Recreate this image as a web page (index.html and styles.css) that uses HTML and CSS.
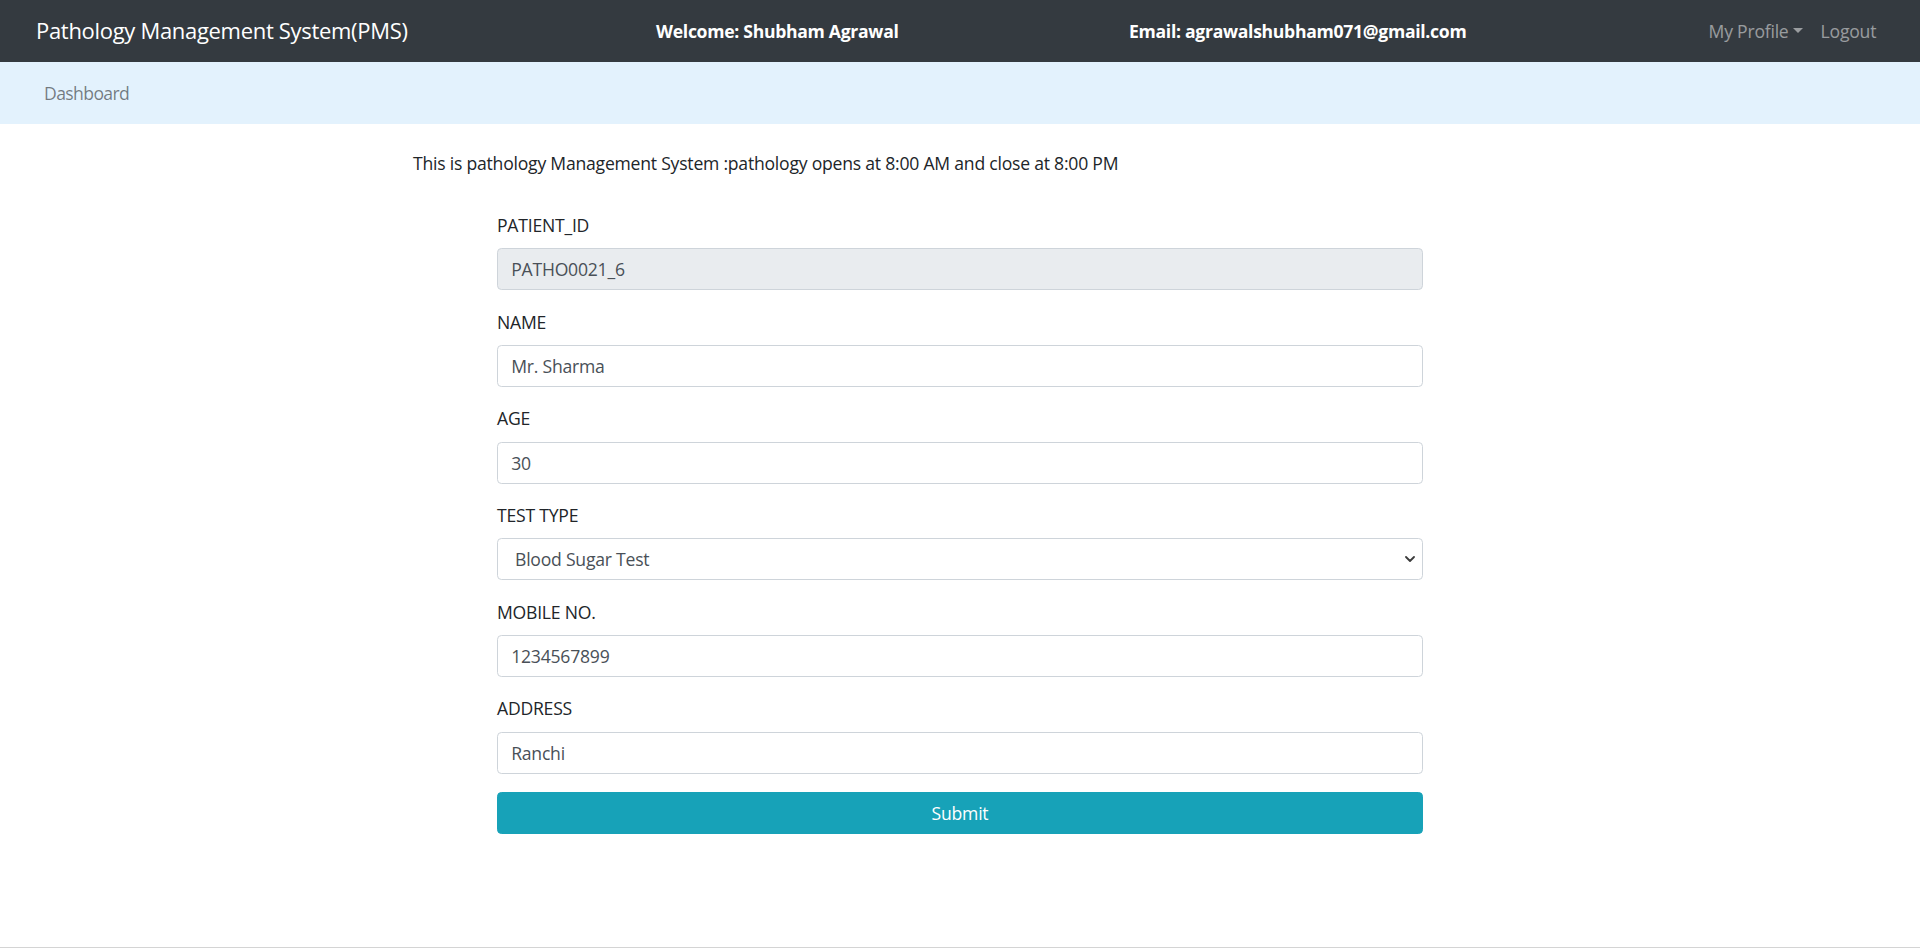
FILE: index.html
```html
<!DOCTYPE html>
<html lang="en">
<head>
<meta charset="utf-8">
<title>Pathology Management System</title>
<link rel="stylesheet" href="styles.css">
</head>
<body>
<header class="topbar">
  <a class="brand" href="#">Pathology Management System(PMS)</a>
  <span class="info">Welcome: Shubham Agrawal</span>
  <span class="info">Email: agrawalshubham071@gmail.com</span>
  <nav class="user-nav">
    <a class="nav-link dropdown-toggle" href="#">My Profile</a>
    <a class="nav-link" href="#">Logout</a>
  </nav>
</header>
<nav class="subbar">
  <a class="sub-link" href="#">Dashboard</a>
</nav>
<main class="page">
  <div class="container">
    <p class="intro">This is pathology Management System :pathology opens at 8:00 AM and close at 8:00 PM</p>
    <form class="patient-form">
      <div class="field">
        <label class="field-label">PATIENT_ID</label>
        <input class="control" type="text" value="PATHO0021_6" disabled>
      </div>
      <div class="field">
        <label class="field-label">NAME</label>
        <input class="control" type="text" value="Mr. Sharma">
      </div>
      <div class="field">
        <label class="field-label">AGE</label>
        <input class="control" type="text" value="30">
      </div>
      <div class="field">
        <label class="field-label">TEST TYPE</label>
        <div class="select-wrap">
          <select class="control select">
            <option>Blood Sugar Test</option>
          </select>
          <svg class="chevron" width="10" height="6" viewBox="0 0 10 6"><path d="M1 1l4 4 4-4" fill="none" stroke="#3c3c3c" stroke-width="1.8" stroke-linecap="round" stroke-linejoin="round"/></svg>
        </div>
      </div>
      <div class="field">
        <label class="field-label">MOBILE NO.</label>
        <input class="control" type="text" value="1234567899">
      </div>
      <div class="field">
        <label class="field-label">ADDRESS</label>
        <input class="control" type="text" value="Ranchi">
      </div>
      <button class="btn-submit" type="button">Submit</button>
    </form>
  </div>
</main>
<footer class="page-footer"></footer>
</body>
</html>
```

FILE: styles.css
```css
* { box-sizing: border-box; }
html, body { margin: 0; padding: 0; }
body {
  font-family: "Open Sans", "Noto Sans", sans-serif;
  font-size: 17.6px;
  line-height: 1.5;
  letter-spacing: -0.013em;
  color: #212529;
  background: #fff;
  min-height: 948px;
  display: flex;
  flex-direction: column;
}
a { text-decoration: none; }

.topbar {
  height: 61.6px;
  background: #343a40;
  display: grid;
  grid-template-columns: 620px 473px 1fr auto;
  align-items: center;
  padding: 0 35px 0 36px;
}
.brand {
  color: #fff;
  font-size: 22px;
  line-height: 33px;
  letter-spacing: -0.014em;
  white-space: nowrap;
}
.info {
  color: #fff;
  font-weight: 700;
  letter-spacing: -0.017em;
  white-space: nowrap;
}
.user-nav {
  display: flex;
  align-items: center;
}
.nav-link {
  color: rgba(255,255,255,.5);
  padding: 0 8.8px;
  white-space: nowrap;
}
.dropdown-toggle::after {
  content: "";
  display: inline-block;
  margin-left: 4.5px;
  vertical-align: 4.5px;
  border-top: 5.3px solid;
  border-left: 5.3px solid transparent;
  border-right: 5.3px solid transparent;
  border-bottom: 0;
}

.subbar {
  height: 62.4px;
  background: #e3f2fd;
  display: flex;
  align-items: center;
  padding: 0 36px;
}
.sub-link {
  color: rgba(0,0,0,.5);
  padding: 0 8px;
  letter-spacing: -0.035em;
}

.page { flex: 1; }
.container {
  max-width: 1094px;
  margin: 0 auto;
  padding-top: 25.8px;
}
.intro {
  margin: 0 0 35.8px;
}
.patient-form {
  width: 926px;
  margin: 0 auto;
  display: flex;
  flex-direction: column;
}
.field {
  display: flex;
  flex-direction: column;
  margin-bottom: 18.5px;
}
.field-label {
  margin-bottom: 10px;
  color: #212529;
}
.control {
  display: block;
  width: 100%;
  height: 41.8px;
  padding: 6.6px 13.2px;
  font-family: inherit;
  font-size: 17.6px;
  line-height: 1.5;
  letter-spacing: -0.013em;
  color: #495057;
  background: #fff;
  border: 1.1px solid #ced4da;
  border-radius: 4.4px;
  outline: none;
}
.control:disabled {
  background: #e9ecef;
  color: #495057;
  opacity: 1;
}
.select-wrap { position: relative; }
.select {
  -webkit-appearance: none;
  appearance: none;
  padding-left: 17px;
}
.chevron {
  position: absolute;
  right: 8px;
  top: 18px;
  pointer-events: none;
}
.btn-submit {
  height: 41.8px;
  width: 100%;
  background: #17a2b8;
  color: #fff;
  border: 1.1px solid #17a2b8;
  border-radius: 4.4px;
  font-family: inherit;
  font-size: 17.6px;
  line-height: 1.5;
  letter-spacing: -0.013em;
  padding: 6.6px 13.2px;
  cursor: pointer;
}
.page-footer {
  border-top: 1px solid #d4d4d4;
}
```
